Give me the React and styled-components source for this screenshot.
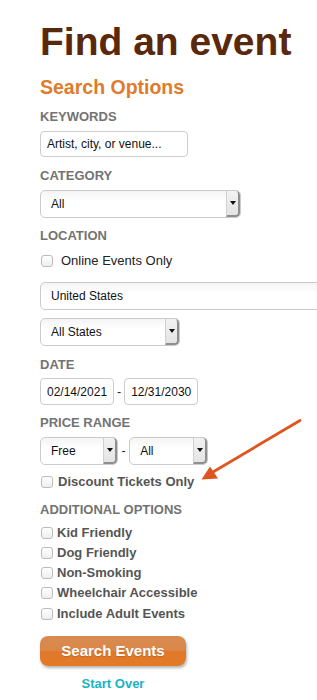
import React from "react";
import styled, { createGlobalStyle } from "styled-components";

const Global = createGlobalStyle`
  html, body { margin: 0; padding: 0; background: #fff; }
  body { overflow-x: hidden; font-family: "Liberation Sans", Arial, sans-serif; }
`;

const Page = styled.div`
  position: relative;
  width: 317px;
  min-height: 700px;
  padding: 19px 0 0 40px;
  box-sizing: border-box;
  overflow: hidden;
`;

const Title = styled.h1`
  margin: 0;
  font: bold 39px/45px "Liberation Sans", Arial, sans-serif;
  color: #5a280a;
  white-space: nowrap;
`;

const SectionTitle = styled.h2`
  margin: 11px 0 0;
  font: bold 19.5px/24px "Liberation Sans", Arial, sans-serif;
  color: #e07b2c;
`;

const Label = styled.div`
  margin-top: ${(p) => p.$mt ?? 10}px;
  font: bold 13px/16px "Liberation Sans", Arial, sans-serif;
  color: #737373;
  text-transform: uppercase;
`;

const TextInput = styled.input`
  display: block;
  box-sizing: border-box;
  width: ${(p) => p.$w}px;
  height: ${(p) => p.$h ?? 26}px;
  margin-top: ${(p) => p.$mt ?? 0}px;
  padding: 0 ${(p) => p.$padR ?? 6}px 0 ${(p) => p.$pad ?? 6}px;
  border: 1px solid #cdcdcd;
  border-radius: 4px;
  background: #fff;
  font: ${(p) => p.$fs ?? 12}px "Liberation Sans", Arial, sans-serif;
  color: #111;
  outline: none;
  &::placeholder { color: #111; opacity: 1; }
`;

const SelectBox = styled.div`
  display: flex;
  align-items: stretch;
  box-sizing: border-box;
  flex: none;
  width: ${(p) => p.$w}px;
  height: 28px;
  margin-top: ${(p) => p.$mt ?? 0}px;
  border: 1px solid #cbcbcb;
  border-radius: 5px;
  background: linear-gradient(#f4f4f4, #fff 40%, #fff);
  overflow: hidden;
`;

const SelectValue = styled.span`
  flex: 1;
  display: flex;
  align-items: center;
  padding-left: 10px;
  font: 12px "Liberation Sans", Arial, sans-serif;
  color: #111;
  white-space: nowrap;
`;

const ArrowBox = styled.span`
  flex: none;
  width: 11px;
  display: flex;
  align-items: center;
  justify-content: center;
  background: linear-gradient(#f2f2f2, #e4e4e4);
  border-left: 1px solid #d0d0d0;
  border-right: 2px solid #8f8f8f;
  border-bottom: 2px solid #8f8f8f;
  border-radius: 0 4px 4px 0;
  &::after {
    content: "";
    width: 0;
    height: 0;
    border-left: 3px solid transparent;
    border-right: 3px solid transparent;
    border-top: 4px solid #111;
  }
`;

const Row = styled.div`
  display: flex;
  align-items: center;
  margin-top: ${(p) => p.$mt ?? 0}px;
`;

const Dash = styled.span`
  margin: 0 ${(p) => p.$m ?? 3}px;
  font: 12.5px "Liberation Sans", Arial, sans-serif;
  color: #222;
`;

const CheckRow = styled.label`
  display: flex;
  align-items: center;
  margin-top: ${(p) => p.$mt ?? 0}px;
  font: ${(p) => (p.$bold ? "bold" : "normal")} 13px/16px "Liberation Sans", Arial, sans-serif;
  color: ${(p) => (p.$bold ? "#555" : "#222")};
  white-space: nowrap;
`;

const Box = styled.input.attrs({ type: "checkbox" })`
  appearance: none;
  -webkit-appearance: none;
  box-sizing: border-box;
  width: 12px;
  height: 12px;
  margin: 0 ${(p) => p.$gap ?? 5}px 0 1px;
  border: 1px solid #bcbcbc;
  border-radius: 3px;
  background: linear-gradient(#fff, #eee);
`;

const OptionList = styled.div`
  display: flex;
  flex-direction: column;
  gap: 4.3px;
  margin-top: 7px;
`;

const Actions = styled.div`
  width: 146px;
  margin-top: 14.3px;
  display: flex;
  flex-direction: column;
  align-items: center;
`;

const SearchButton = styled.button`
  width: 146px;
  height: 30px;
  border: none;
  border-radius: 8px;
  background: linear-gradient(#d88c52 0%, #da8747 48%, #e0782a 52%, #e27a28 100%);
  box-shadow: 1px 2px 3px rgba(0, 0, 0, 0.3);
  color: #fff;
  font: bold 15px "Liberation Sans", Arial, sans-serif;
  text-shadow: 0 1px 1px rgba(0, 0, 0, 0.15);
  padding: 0;
`;

const StartOver = styled.a`
  margin-top: 10px;
  font: bold 13px/16px "Liberation Sans", Arial, sans-serif;
  color: #19b2c3;
  text-decoration: none;
`;

const Annotation = styled.svg`
  position: absolute;
  left: 0;
  top: 0;
  pointer-events: none;
`;

const Select = ({ w, mt, value, noArrow }) => (
  <SelectBox $w={w} $mt={mt}>
    <SelectValue>{value}</SelectValue>
    {!noArrow && <ArrowBox />}
  </SelectBox>
);

const options = ["Kid Friendly", "Dog Friendly", "Non-Smoking", "Wheelchair Accessible", "Include Adult Events"];

export default function App() {
  return (
    <>
      <Global />
      <Page>
        <Title>Find an event</Title>
        <SectionTitle>Search Options</SectionTitle>

        <Label $mt={10}>Keywords</Label>
        <TextInput $w={148} $mt={6} placeholder="Artist, city, or venue..." />

        <Label $mt={10.5}>Category</Label>
        <Select w={201} mt={6.5} value="All" />

        <Label $mt={10}>Location</Label>
        <CheckRow $mt={9}>
          <Box $gap={8} />
          Online Events Only
        </CheckRow>
        <Select w={300} mt={13} value="United States" noArrow />
        <Select w={140} mt={8} value="All States" />

        <Label $mt={10.5}>Date</Label>
        <Row $mt={5.5}>
          <TextInput $w={74} $h={27} $pad={6} $padR={0} $fs={12} defaultValue="02/14/2021" />
          <Dash $m={3}>-</Dash>
          <TextInput $w={74} $h={27} $pad={6} $padR={0} $fs={12} defaultValue="12/31/2030" />
        </Row>

        <Label $mt={10}>Price Range</Label>
        <Row $mt={6}>
          <Select w={78} value="Free" />
          <Dash $m={3.5}>-</Dash>
          <Select w={79} value="All" />
        </Row>
        <CheckRow $bold $mt={9}>
          <Box />
          Discount Tickets Only
        </CheckRow>

        <Label $mt={11.5}>Additional Options</Label>
        <OptionList>
          {options.map((o) => (
            <CheckRow $bold key={o}>
              <Box $gap={4} />
              {o}
            </CheckRow>
          ))}
        </OptionList>

        <Actions>
          <SearchButton>Search Events</SearchButton>
          <StartOver href="#">Start Over</StartOver>
        </Actions>

        <Annotation width="317" height="700" viewBox="0 0 317 700">
          <line x1="300" y1="420.5" x2="213" y2="472" stroke="#e0541e" strokeWidth="2.8" strokeLinecap="round" />
          <polygon points="201.5,479.5 210,466.5 218,478.5" fill="#e0541e" />
        </Annotation>
      </Page>
    </>
  );
}
